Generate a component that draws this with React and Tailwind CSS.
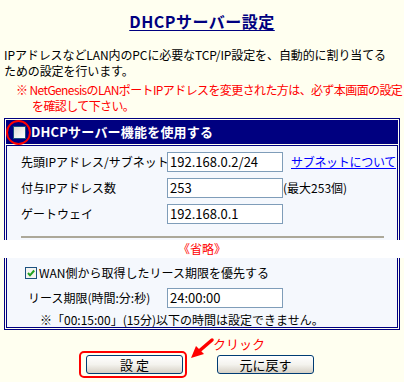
import React from "react";

const font = { fontFamily: '"Noto Sans CJK JP", "Noto Sans", sans-serif' };

function XpInput({ value }) {
  return (
    <div className="w-[116px] h-[20px] bg-white border border-[#7F9DB9] pl-[2px] text-[13px] leading-[18px] text-black">
      {value}
    </div>
  );
}

function XpButton({ children }) {
  return (
    <button className="w-[97px] h-[19px] rounded-[3px] border border-[#003C74] bg-gradient-to-b from-white via-[#F4F3EE] to-[#D6D0C5] text-[13px] leading-[17px] text-black">
      {children}
    </button>
  );
}

export default function App() {
  return (
    <div className="relative w-[404px] h-[382px] overflow-hidden bg-[#FFFFF0] text-black" style={font}>
      {/* タイトル */}
      <div className="h-[47px] pt-[9px] text-center">
        <span className="text-[16px] leading-[18px] font-bold text-[#000080] underline underline-offset-2 tracking-[0.5px]">
          DHCPサーバー設定
        </span>
      </div>

      <p className="pl-[4px] text-[12px] leading-[16px] whitespace-nowrap tracking-[-0.1px]">
        IPアドレスなどLAN内のPCに必要なTCP/IP設定を、自動的に割り当てる
        <br />
        ための設定を行います。
      </p>

      <p className="mt-[3px] pl-[16px] text-[12px] leading-[16px] text-[#FF0000] whitespace-nowrap tracking-[-0.6px]">
        ※ NetGenesisのLANポートIPアドレスを変更された方は、必ず本画面の設定
        <br />
        <span className="pl-[16px]">を確認して下さい。</span>
      </p>

      {/* 上側パネル */}
      <div className="mt-[4px] mx-[4px] border-x border-t border-[#000080] px-[1px] pt-[1px]">
        <div className="h-[24px] bg-[#000080] flex items-center pl-[7px] gap-[5px]">
          <div className="w-[13px] h-[13px] border border-[#1C5180] bg-gradient-to-br from-[#DCDCD7] to-white" />
          <span className="text-[13px] font-bold text-white tracking-[0.2px]">DHCPサーバー機能を使用する</span>
        </div>
        <div className="mt-[1px] border-x border-t border-[#000080] bg-[#F5F8FD] pt-[6px] pb-[2px] text-[12px]">
          <div className="flex flex-col gap-[6px]">
            <div className="flex items-center h-[20px] pl-[14px]">
              <span className="w-[146px] whitespace-nowrap">先頭IPアドレス/サブネット</span>
              <XpInput value="192.168.0.2/24" />
              <span className="ml-[8px] text-[#0000FF] underline whitespace-nowrap tracking-[-0.3px]">サブネットについて</span>
            </div>
            <div className="flex items-center h-[20px] pl-[14px]">
              <span className="w-[146px]">付与IPアドレス数</span>
              <XpInput value="253" />
              <span className="whitespace-nowrap">(最大253個)</span>
            </div>
            <div className="flex items-center h-[20px] pl-[14px]">
              <span className="w-[146px]">ゲートウェイ</span>
              <XpInput value="192.168.0.1" />
            </div>
          </div>
          <div className="mt-[12px] ml-[14px] mr-[13px] h-[2px] bg-[#ACA899]" />
        </div>
      </div>

      {/* 省略 */}
      <div className="h-[18px] bg-white text-center text-[12px] leading-[18px] text-[#FF0000]">《省略》</div>

      {/* 下側パネル */}
      <div className="mx-[4px] border-x border-b border-[#000080] px-[1px] pb-[1px]">
        <div className="border-x border-b border-[#000080] bg-[#F5F8FD] pt-[5px] text-[12px]">
          <div className="flex items-center h-[20px] pl-[18px] gap-[1px]">
            <svg width="12" height="12" viewBox="0 0 12 12">
              <rect x="0.5" y="0.5" width="11" height="11" fill="#F4F4F0" stroke="#1C5180" />
              <path d="M3 6 L5 8.3 L9.2 3.5" fill="none" stroke="#21A121" strokeWidth="2" />
            </svg>
            <span className="ml-[1px]">WAN側から取得したリース期限を優先する</span>
          </div>
          <div className="mt-[5px] flex items-center h-[20px] pl-[21px]">
            <span className="w-[139px]">リース期限(時間:分:秒)</span>
            <XpInput value="24:00:00" />
          </div>
          <div className="mt-[5px] pl-[33px] h-[14px] leading-[14px]">
            ※「00:15:00」(15分)以下の時間は設定できません。
          </div>
        </div>
      </div>

      {/* ボタン */}
      <div className="mt-[25px] flex pl-[86px] gap-[34px]">
        <XpButton>設 定</XpButton>
        <XpButton>元に戻す</XpButton>
      </div>

      {/* 注釈 */}
      <div className="absolute left-[6px] top-[120px] w-[25px] h-[25px] rounded-full border-2 border-[#FF0000]" />
      <div className="absolute left-[79px] top-[351px] w-[108px] h-[27px] rounded-[5px] border-2 border-[#FF0000]" />
      <span className="absolute left-[213px] top-[336px] text-[13px] leading-[16px] text-[#FF0000]">クリック</span>
      <svg className="absolute left-[188px] top-[337px]" width="28" height="26" viewBox="0 0 28 26">
        <path d="M24 3 L10 15" stroke="#FF0000" strokeWidth="3.5" strokeLinecap="round" />
        <path d="M3 21 L8 9 L16 17 Z" fill="#FF0000" />
      </svg>
    </div>
  );
}
